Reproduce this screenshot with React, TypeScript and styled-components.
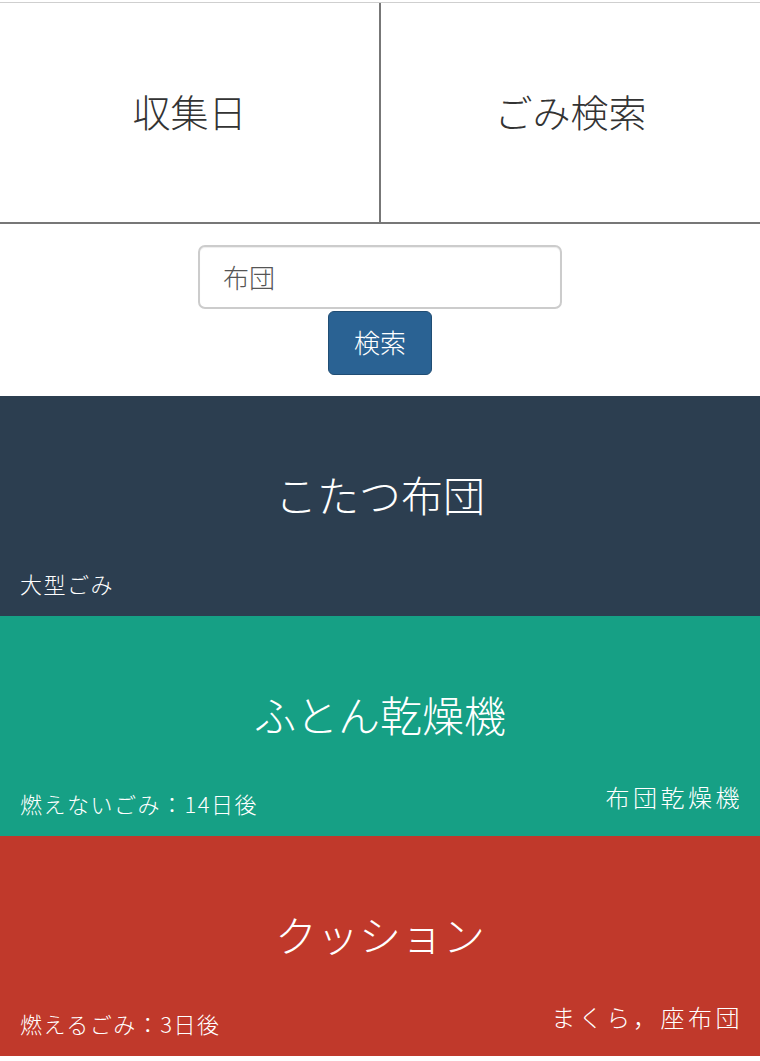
import React from 'react';
import styled, { createGlobalStyle } from 'styled-components';

const GlobalStyle = createGlobalStyle`
    html, body {
        margin: 0;
        padding: 0;
        background-color: #ffffff;
        font-family: "Noto Sans CJK JP", "Noto Sans", sans-serif;
        font-weight: 300;
    }
`

const Page = styled.div`
    width: 760px;
    padding-top: 2px;
`

const Tabs = styled.div`
    display: flex;
    border-top: 1px solid #cfcfcf;
    border-bottom: 2px solid #777777;
    height: 219px;
`

const Tab = styled.div<{ $divider?: boolean }>`
    flex: 1;
    display: flex;
    justify-content: center;
    align-items: center;
    padding-bottom: 5px;
    font-size: 38px;
    color: #333333;
    border-right: ${p => (p.$divider ? '2px solid #777777' : 'none')};
`

const SearchForm = styled.div`
    display: flex;
    flex-direction: column;
    align-items: center;
    padding: 21px 0 21px;
    gap: 2px;
`

const SearchInput = styled.input`
    box-sizing: border-box;
    width: 364px;
    height: 64px;
    padding: 0 0 2px 23px;
    font-family: "Noto Sans CJK JP", sans-serif;
    font-weight: 300;
    font-size: 26px;
    color: #555555;
    border: 2px solid #cccccc;
    border-radius: 7px;
    outline: none;
    box-shadow: inset 0 1px 1px rgba(0, 0, 0, 0.075);
`

const SearchButton = styled.button`
    box-sizing: border-box;
    width: 104px;
    height: 64px;
    padding: 0 0 3px;
    font-family: "Noto Sans CJK JP", sans-serif;
    font-weight: 300;
    font-size: 26px;
    color: #ffffff;
    background-color: #2a6293;
    border: 1px solid #204d74;
    border-radius: 6px;
`

const Card = styled.div<{ $bg: string }>`
    box-sizing: border-box;
    height: 220px;
    padding: 0 20px 18px;
    display: flex;
    flex-direction: column;
    background-color: ${p => p.$bg};
    color: #ffffff;
`

const CardTitle = styled.div`
    margin-top: 68px;
    text-align: center;
    font-size: 42px;
    line-height: 60px;
`

const CardFooter = styled.div`
    margin-top: auto;
    display: flex;
    justify-content: space-between;
    align-items: flex-end;
`

const Category = styled.span`
    font-size: 22px;
    line-height: 30px;
    letter-spacing: 1.5px;
`

const Aliases = styled.span`
    font-size: 24px;
    line-height: 30px;
    letter-spacing: 3.5px;
    margin-bottom: 6px;
    margin-right: -3px;
`

const items = [
    { name: 'こたつ布団', category: '大型ごみ', aliases: '', bg: '#2c3e50' },
    { name: 'ふとん乾燥機', category: '燃えないごみ：14日後', aliases: '布団乾燥機', bg: '#16a085' },
    { name: 'クッション', category: '燃えるごみ：3日後', aliases: 'まくら，座布団', bg: '#c0392b' },
]

const App = () => {
    return (
        <Page>
            <GlobalStyle />
            <Tabs>
                <Tab $divider>収集日</Tab>
                <Tab>ごみ検索</Tab>
            </Tabs>
            <SearchForm>
                <SearchInput defaultValue="布団" />
                <SearchButton>検索</SearchButton>
            </SearchForm>
            {items.map(item => (
                <Card key={item.name} $bg={item.bg}>
                    <CardTitle>{item.name}</CardTitle>
                    <CardFooter>
                        <Category>{item.category}</Category>
                        <Aliases>{item.aliases}</Aliases>
                    </CardFooter>
                </Card>
            ))}
        </Page>
    )
}

export default App
